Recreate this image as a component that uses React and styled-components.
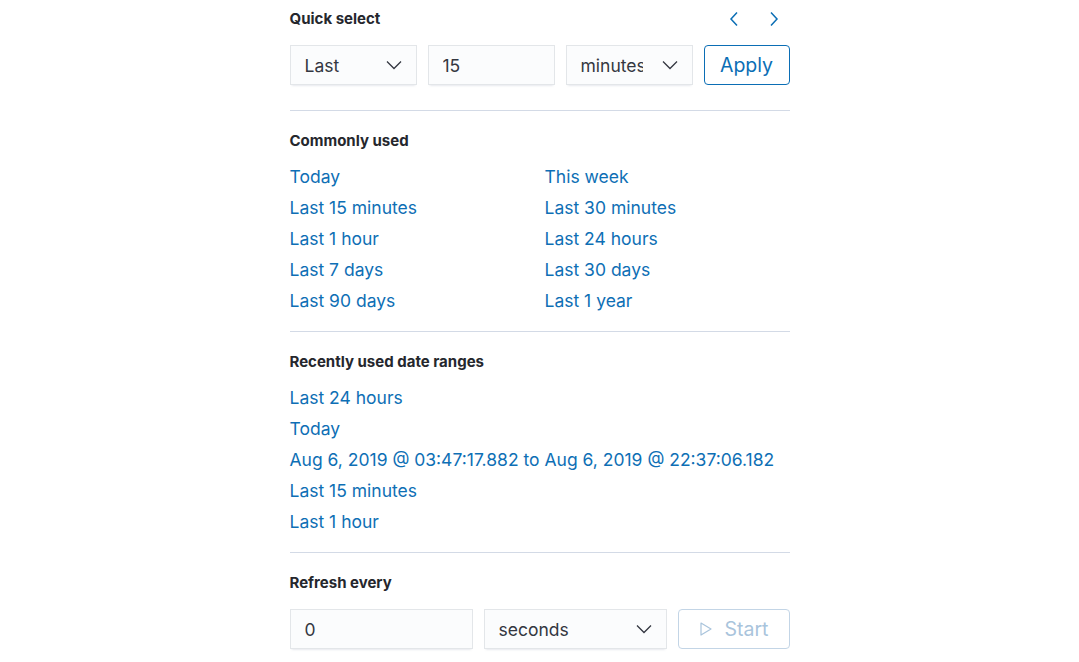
import React from "react";
import styled, { createGlobalStyle } from "styled-components";

const Global = createGlobalStyle`
  html, body { margin: 0; padding: 0; background: #fff; }
  body { font-family: Inter, "Noto Sans", sans-serif; -webkit-font-smoothing: antialiased; }
`;

const Panel = styled.div`
  width: 500px;
  margin: 0 auto;
  padding-top: 8px;
`;

const Section = styled.section`
  padding: ${(p) => (p.$first ? "0 0 25px" : "19px 0 15px")};
  border-bottom: ${(p) => (p.$last ? "none" : "1px solid #d3dae6")};
`;

const HeaderRow = styled.div`
  display: flex;
  align-items: center;
  justify-content: space-between;
  height: 22px;
`;

const Title = styled.h3`
  margin: 0;
  font-size: 15px;
  line-height: 22px;
  font-weight: 700;
  color: #25272d;
`;

const Arrows = styled.div`
  display: flex;
  gap: 24px;
  padding-right: 8px;
`;

const ArrowBtn = styled.button`
  background: none;
  border: none;
  padding: 0;
  width: 16px;
  height: 20px;
  display: flex;
  align-items: center;
  justify-content: center;
  color: #0b6eb5;
  cursor: pointer;
`;

const Controls = styled.div`
  display: flex;
  gap: 11px;
  margin-top: 15px;
`;

const Field = styled.div`
  box-sizing: border-box;
  width: ${(p) => p.$w}px;
  height: 40px;
  flex: none;
  display: flex;
  align-items: center;
  padding: 0 15px 0 15px;
  background: #fbfcfd;
  box-shadow: 0 1px 1px -1px rgba(152, 162, 179, 0.2),
    0 3px 2px -2px rgba(152, 162, 179, 0.2),
    inset 0 0 0 1px rgba(15, 38, 63, 0.1);
  font-size: 17.5px;
  color: #343741;
  overflow: hidden;
`;

const FieldText = styled.span`
  flex: 1;
  white-space: nowrap;
  overflow: hidden;
  text-overflow: clip;
  max-width: ${(p) => (p.$max ? `${p.$max}px` : "none")};
`;

const Chevron = styled.svg`
  flex: none;
  margin-left: auto;
  color: #343741;
`;

const Button = styled.button`
  box-sizing: border-box;
  width: ${(p) => p.$w}px;
  height: 40px;
  flex: none;
  display: flex;
  align-items: center;
  justify-content: center;
  gap: 12px;
  background: #fff;
  border: 1px solid ${(p) => (p.$disabled ? "#c3d5e6" : "#0b6eb5")};
  border-radius: 4px;
  color: ${(p) => (p.$disabled ? "#a9c4dc" : "#0b6eb5")};
  font-family: inherit;
  font-size: 19.5px;
  padding: 0;
`;

const LinkGrid = styled.div`
  display: grid;
  grid-template-columns: ${(p) => (p.$cols === 2 ? "255px 1fr" : "1fr")};
  margin-top: 9px;
`;

const LinkItem = styled.a`
  display: block;
  font-size: 17.5px;
  line-height: 31px;
  color: #0e6fb5;
  text-decoration: none;
  white-space: nowrap;
  cursor: pointer;
`;

const ChevronDown = () => (
  <Chevron width="16" height="16" viewBox="0 0 16 16" fill="none">
    <path d="M1 4.5l7 7 7-7" stroke="currentColor" strokeWidth="1.3" />
  </Chevron>
);

const common = [
  "Today",
  "This week",
  "Last 15 minutes",
  "Last 30 minutes",
  "Last 1 hour",
  "Last 24 hours",
  "Last 7 days",
  "Last 30 days",
  "Last 90 days",
  "Last 1 year",
];

const recent = [
  "Last 24 hours",
  "Today",
  "Aug 6, 2019 @ 03:47:17.882 to Aug 6, 2019 @ 22:37:06.182",
  "Last 15 minutes",
  "Last 1 hour",
];

export default function App() {
  return (
    <>
      <Global />
      <Panel>
        <Section $first>
          <HeaderRow>
            <Title>Quick select</Title>
            <Arrows>
              <ArrowBtn aria-label="Previous">
                <svg width="10" height="16" viewBox="0 0 10 16" fill="none">
                  <path d="M8 1.5L2 8l6 6.5" stroke="currentColor" strokeWidth="1.5" />
                </svg>
              </ArrowBtn>
              <ArrowBtn aria-label="Next">
                <svg width="10" height="16" viewBox="0 0 10 16" fill="none">
                  <path d="M2 1.5L8 8l-6 6.5" stroke="currentColor" strokeWidth="1.5" />
                </svg>
              </ArrowBtn>
            </Arrows>
          </HeaderRow>
          <Controls>
            <Field $w={127}>
              <FieldText>Last</FieldText>
              <ChevronDown />
            </Field>
            <Field $w={127}>
              <FieldText>15</FieldText>
            </Field>
            <Field $w={127}>
              <FieldText $max={62}>minutes</FieldText>
              <ChevronDown />
            </Field>
            <Button $w={86}>Apply</Button>
          </Controls>
        </Section>

        <Section>
          <Title>Commonly used</Title>
          <LinkGrid $cols={2}>
            {common.map((t, i) => (
              <LinkItem key={i}>{t}</LinkItem>
            ))}
          </LinkGrid>
        </Section>

        <Section>
          <Title>Recently used date ranges</Title>
          <LinkGrid $cols={1}>
            {recent.map((t, i) => (
              <LinkItem key={i}>{t}</LinkItem>
            ))}
          </LinkGrid>
        </Section>

        <Section $last>
          <Title>Refresh every</Title>
          <Controls>
            <Field $w={183}>
              <FieldText>0</FieldText>
            </Field>
            <Field $w={183}>
              <FieldText>seconds</FieldText>
              <ChevronDown />
            </Field>
            <Button $w={112} $disabled>
              <svg width="14" height="16" viewBox="0 0 14 16" fill="none">
                <path d="M2 2l10 6-10 6z" stroke="currentColor" strokeWidth="1.2" strokeLinejoin="round" />
              </svg>
              Start
            </Button>
          </Controls>
        </Section>
      </Panel>
    </>
  );
}
